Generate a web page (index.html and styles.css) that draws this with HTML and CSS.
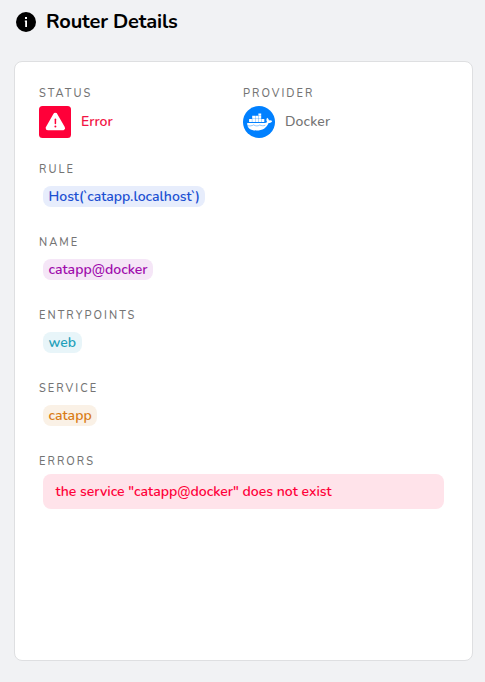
FILE: index.html
```html
<!DOCTYPE html>
<html lang="en">
<head>
<meta charset="utf-8">
<title>Router Details</title>
<link rel="stylesheet" href="styles.css">
</head>
<body>
<header class="heading">
  <svg class="info" viewBox="0 0 20 20"><circle cx="10" cy="10" r="10"/><path d="M9 5h2v2H9zM8.800 8.500H11V15H9.200V9.700h-.4z" fill="#fff"/></svg>
  <h1>Router Details</h1>
</header>
<main class="card">
  <div class="summary">
    <section>
      <h2>Status</h2>
      <div class="entry">
        <svg class="icon" viewBox="0 0 32 32"><rect width="32" height="32" rx="3.500" fill="#ff0039"/><path d="M16.300 9 23.800 22H8.900z" fill="#fff" stroke="#fff" stroke-width="4.500" stroke-linejoin="round"/><path d="M16.400 13.200v4.300" stroke="#ff0039" stroke-width="1.500" stroke-linecap="round"/><circle cx="16.400" cy="20.400" r="1" fill="#ff0039"/></svg>
        <span class="value error">Error</span>
      </div>
    </section>
    <section>
      <h2>Provider</h2>
      <div class="entry">
        <svg class="icon" viewBox="0 0 32 32"><circle cx="16" cy="16" r="16" fill="#0080ff"/><path d="M4.200 17H21.500c1.200 0 2-.3 2.600-.9-1-1.300-.9-3 .1-4.300 1.100.8 1.700 1.700 1.800 2.700 1.200-.3 2.300-.1 3.200.5-.6 1.400-1.800 2-3.600 2C23.500 22 19.700 24.500 13.400 24.500 7.500 24.500 4 22 4.200 17z" fill="#fff"/><path d="M6.100 13h2.800v3.100H6.100zM9.200 13h2.800v3.100H9.200zM12.300 13h2.800v3.100h-2.800zM15.400 13h2.800v3.100h-2.800zM18.500 13h2.800v3.100h-2.800zM9.200 9.800h2.800v2.900H9.200zM12.300 9.800h2.800v2.900h-2.800zM15.400 9.800h2.800v2.900h-2.800zM15.400 7.500h2.800v2h-2.800z" fill="#fff"/><path d="M4 19.700c3 .5 5.100.1 6.600-.8 2.200 1.400 4.400 1.300 6.200.1 1.700.9 3.600 1 5.500.2" fill="none" stroke="#0080ff" stroke-width=".45"/></svg>
        <span class="value docker">Docker</span>
      </div>
    </section>
  </div>
  <section class="field"><h2>Rule</h2><div class="chip blue">Host(<span class="tick">`</span>catapp.localhost<span class="tick">`</span>)</div></section>
  <section class="field"><h2>Name</h2><div class="chip purple">catapp@docker</div></section>
  <section class="field"><h2>Entrypoints</h2><div class="chip cyan">web</div></section>
  <section class="field"><h2>Service</h2><div class="chip orange">catapp</div></section>
  <section class="field"><h2>Errors</h2><div class="alert">the service "catapp@docker" does not exist</div></section>
</main>
</body>
</html>
```
FILE: styles.css
```css
* { box-sizing: border-box; }
body { margin: 0; height: 682px; background: #f1f2f4; font-family: Nunito, "Nunito Sans", "Open Sans", sans-serif; overflow: hidden; }
h1, h2 { margin: 0; }
.heading { display: flex; align-items: center; gap: 10px; height: 61px; padding: 1px 16px 19px; }
.info { width: 20px; height: 20px; }
h1 { font-size: 20px; line-height: 26px; font-weight: 700; letter-spacing: -.17px; white-space: nowrap; }
.card { width: 459px; height: 600px; margin-left: 14px; padding: 24px; border: 1px solid #dedfe1; border-radius: 8px; background: #fff; }
.summary { display: grid; grid-template-columns: 204px 1fr; height: 76px; }
h2 { height: 16px; line-height: 16px; font-size: 11px; font-weight: 500; letter-spacing: 2.030px; text-transform: uppercase; color: #747474; white-space: nowrap; }
.entry { display: flex; align-items: center; gap: 10px; margin-top: 4px; }
.icon { width: 32px; height: 32px; }
.value { font-size: 14px; line-height: 20px; font-weight: 500; color: #737373; }
.docker { letter-spacing: .15px; }
.value.error { color: #f21444; font-weight: 600; }
.field { height: 73px; }
.chip { height: 21px; margin: 8px 0 0 4px; padding: 0 5.500px; border-radius: 8px; font-size: 14px; line-height: 21px; font-weight: 600; white-space: nowrap; }
.tick { margin: 0 -.3px 0 -1.300px; }
.blue { width: 162px; color: #1c50d2; background: #e7edfc; }
.purple { width: 110px; color: #9f0cad; background: #f5e6f7; }
.cyan { width: 39px; color: #1ea0ba; background: #e8f5f9; }
.orange { width: 54px; color: #d97c16; background: #faf1e6; }
.alert { height: 35px; margin: 4px 4px 0; padding: 0 12.500px; border-radius: 8px; background: #ffe3ea; color: #ff0039; font-size: 14px; line-height: 35px; font-weight: 600; white-space: nowrap; }
```
